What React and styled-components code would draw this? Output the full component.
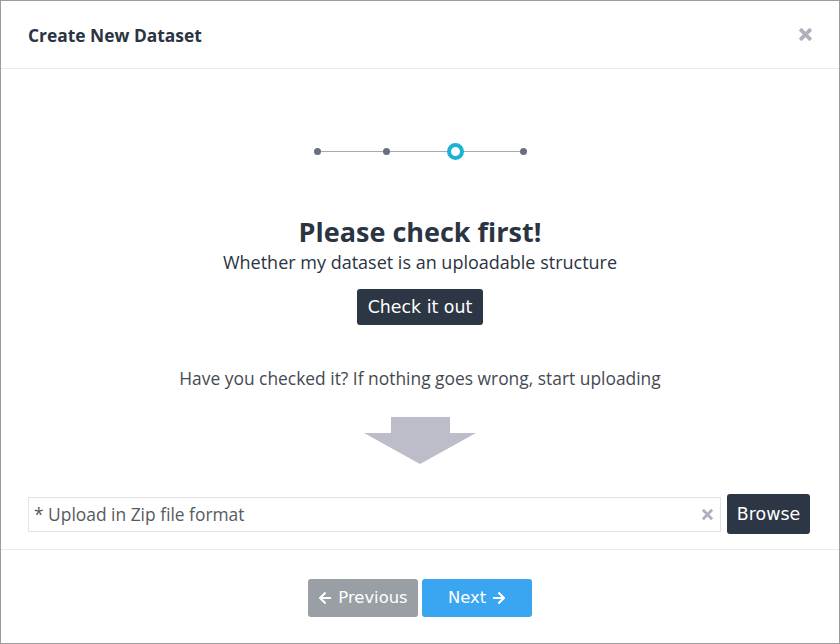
import React from "react";
import styled, { createGlobalStyle } from "styled-components";
import { FaArrowLeft, FaArrowRight } from "react-icons/fa";

const Global = createGlobalStyle`
  html, body { margin: 0; padding: 0; background: #fff; }
  * { box-sizing: border-box; }
`;

const Modal = styled.div`
  width: 840px;
  height: 644px;
  border: 1px solid #9c9c9c;
  display: flex;
  flex-direction: column;
  font-family: "Open Sans", "Liberation Sans", sans-serif;
  color: #2c3645;
`;

const Header = styled.div`
  height: 68px;
  flex: none;
  display: flex;
  align-items: center;
  justify-content: space-between;
  padding: 0 24px 0 27px;
  border-bottom: 1px solid #e9ebee;
`;

const Title = styled.h1`
  margin: 0;
  font-size: 17.4px;
  font-weight: 700;
  color: #2a3442;
`;

const CloseBtn = styled.button`
  border: none;
  background: none;
  padding: 0;
  width: 20px;
  height: 20px;
  display: flex;
  align-items: center;
  justify-content: center;
  cursor: pointer;
`;

const Body = styled.div`
  height: 481px;
  flex: none;
  display: flex;
  flex-direction: column;
  align-items: center;
  padding: 74px 28px 15px 28px;
  border-bottom: 1px solid #e9ebee;
`;

const Stepper = styled.div`
  position: relative;
  width: 222px;
  height: 16px;
  margin-left: 1px;
  display: flex;
  align-items: center;
  justify-content: space-between;
  &::before {
    content: "";
    position: absolute;
    left: 8px;
    right: 8px;
    top: 7.5px;
    height: 1px;
    background: #a8aab6;
  }
`;

const StepSlot = styled.div`
  position: relative;
  flex: none;
  width: 16px;
  height: 16px;
  display: flex;
  align-items: center;
  justify-content: center;
`;

const Dot = styled.span`
  display: block;
  flex: none;
  border-radius: 50%;
  ${(p) =>
    p.$active
      ? `width: 17px; height: 17px; border: 4px solid #1cb2d4; background: #fff; transform: translateX(1px);`
      : `width: 7px; height: 7px; background: #687080;`}
`;

const Heading = styled.h2`
  margin: 57px 0 0;
  font-size: 27px;
  line-height: 32px;
  font-weight: 700;
  color: #2a3442;
`;

const Sub = styled.p`
  margin: 2px 0 0;
  font-size: 18px;
  line-height: 24px;
  color: #2a3442;
`;

const DarkButton = styled.button`
  border: none;
  border-radius: 3px;
  background: #2c3645;
  color: #fff;
  font-family: "DejaVu Sans", sans-serif;
  cursor: pointer;
  padding: 0;
`;

const CheckButton = styled(DarkButton)`
  margin-top: 15px;
  width: 126px;
  height: 36px;
  font-size: 17.4px;
`;

const Hint = styled.p`
  margin: 41px 0 0;
  font-size: 17.4px;
  line-height: 24px;
  color: #444a52;
`;

const ArrowWrap = styled.div`
  margin-top: 27px;
  width: 112px;
  height: 47px;
  display: flex;
`;

const UploadRow = styled.div`
  margin: 30px 1px 0 -1px;
  align-self: stretch;
  height: 40px;
  display: flex;
  align-items: center;
  gap: 6px;
`;

const InputBox = styled.div`
  flex: 1;
  height: 35px;
  border: 1px solid #e2e3e6;
  display: flex;
  align-items: center;
  padding: 0 6px 0 5px;
`;

const Placeholder = styled.span`
  flex: 1;
  font-size: 17.4px;
  color: #555b62;
`;

const BrowseButton = styled(DarkButton)`
  width: 83px;
  height: 40px;
  font-size: 17.4px;
`;

const Footer = styled.div`
  flex: 1;
  display: flex;
  align-items: center;
  justify-content: center;
  gap: 4px;
  padding-top: 2px;
`;

const NavButton = styled.button`
  width: 110px;
  height: 38px;
  border: none;
  border-radius: 3px;
  background: ${(p) => (p.$primary ? "#3aa5f0" : "#9a9ea5")};
  color: #fff;
  font-family: "DejaVu Sans", sans-serif;
  font-size: 16.4px;
  display: flex;
  align-items: center;
  justify-content: center;
  gap: 6px;
  cursor: pointer;
  svg { width: 14px; height: 14px; }
`;

const Cross = ({ size = 14, color = "#aeb0bb", w = 3.2 }) => (
  <svg width={size} height={size} viewBox="0 0 14 14">
    <path d="M2 2 L12 12 M12 2 L2 12" stroke={color} strokeWidth={w} strokeLinecap="butt" />
  </svg>
);

export default function App() {
  const steps = [false, false, true, false];
  return (
    <>
      <Global />
      <Modal>
        <Header>
          <Title>Create New Dataset</Title>
          <CloseBtn aria-label="close">
            <Cross size={15} w={3.4} />
          </CloseBtn>
        </Header>
        <Body>
          <Stepper>
            {steps.map((a, i) => (
              <StepSlot key={i}>
                <Dot $active={a} />
              </StepSlot>
            ))}
          </Stepper>
          <Heading>Please check first!</Heading>
          <Sub>Whether my dataset is an uploadable structure</Sub>
          <CheckButton>Check it out</CheckButton>
          <Hint>Have you checked it? If nothing goes wrong, start uploading</Hint>
          <ArrowWrap>
            <svg width="112" height="47" viewBox="0 0 112 47">
              <polygon points="27,0 86,0 86,16 112,16 56,47 0,16 27,16" fill="#bdbdca" />
            </svg>
          </ArrowWrap>
          <UploadRow>
            <InputBox>
              <Placeholder>* Upload in Zip file format</Placeholder>
              <Cross size={13} w={3} />
            </InputBox>
            <BrowseButton>Browse</BrowseButton>
          </UploadRow>
        </Body>
        <Footer>
          <NavButton>
            <FaArrowLeft /> Previous
          </NavButton>
          <NavButton $primary>
            Next <FaArrowRight />
          </NavButton>
        </Footer>
      </Modal>
    </>
  );
}
